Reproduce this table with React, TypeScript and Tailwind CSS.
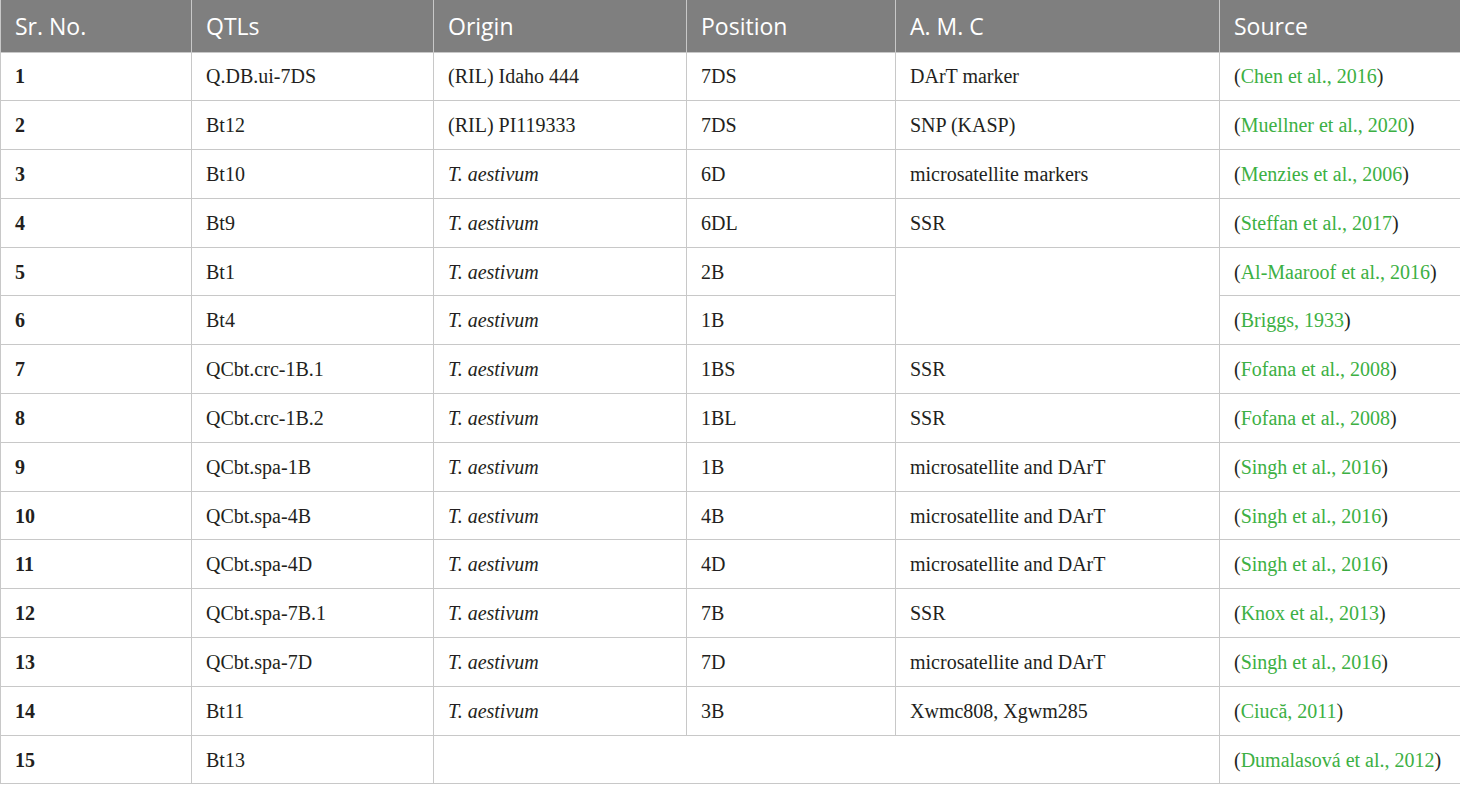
type Row = {
  no: string;
  qtl: string;
  origin?: string;
  italic?: boolean;
  pos?: string;
  amc?: string;
  src: string;
  year: string;
};

const rows: Row[] = [
  { no: '1', qtl: 'Q.DB.ui-7DS', origin: '(RIL) Idaho 444', pos: '7DS', amc: 'DArT marker', src: 'Chen et al.', year: '2016' },
  { no: '2', qtl: 'Bt12', origin: '(RIL) PI119333', pos: '7DS', amc: 'SNP (KASP)', src: 'Muellner et al.', year: '2020' },
  { no: '3', qtl: 'Bt10', origin: 'T. aestivum', italic: true, pos: '6D', amc: 'microsatellite markers', src: 'Menzies et al.', year: '2006' },
  { no: '4', qtl: 'Bt9', origin: 'T. aestivum', italic: true, pos: '6DL', amc: 'SSR', src: 'Steffan et al.', year: '2017' },
  { no: '5', qtl: 'Bt1', origin: 'T. aestivum', italic: true, pos: '2B', src: 'Al-Maaroof et al.', year: '2016' },
  { no: '6', qtl: 'Bt4', origin: 'T. aestivum', italic: true, pos: '1B', src: 'Briggs', year: '1933' },
  { no: '7', qtl: 'QCbt.crc-1B.1', origin: 'T. aestivum', italic: true, pos: '1BS', amc: 'SSR', src: 'Fofana et al.', year: '2008' },
  { no: '8', qtl: 'QCbt.crc-1B.2', origin: 'T. aestivum', italic: true, pos: '1BL', amc: 'SSR', src: 'Fofana et al.', year: '2008' },
  { no: '9', qtl: 'QCbt.spa-1B', origin: 'T. aestivum', italic: true, pos: '1B', amc: 'microsatellite and DArT', src: 'Singh et al.', year: '2016' },
  { no: '10', qtl: 'QCbt.spa-4B', origin: 'T. aestivum', italic: true, pos: '4B', amc: 'microsatellite and DArT', src: 'Singh et al.', year: '2016' },
  { no: '11', qtl: 'QCbt.spa-4D', origin: 'T. aestivum', italic: true, pos: '4D', amc: 'microsatellite and DArT', src: 'Singh et al.', year: '2016' },
  { no: '12', qtl: 'QCbt.spa-7B.1', origin: 'T. aestivum', italic: true, pos: '7B', amc: 'SSR', src: 'Knox et al.', year: '2013' },
  { no: '13', qtl: 'QCbt.spa-7D', origin: 'T. aestivum', italic: true, pos: '7D', amc: 'microsatellite and DArT', src: 'Singh et al.', year: '2016' },
  { no: '14', qtl: 'Bt11', origin: 'T. aestivum', italic: true, pos: '3B', amc: 'Xwmc808, Xgwm285', src: 'Ciucă', year: '2011' },
  { no: '15', qtl: 'Bt13', src: 'Dumalasová et al.', year: '2012' },
];

const headers = ['Sr. No.', 'QTLs', 'Origin', 'Position', 'A. M. C', 'Source'];
const td = 'border border-[#c8c8c8] px-[14px] align-middle';

export default function App() {
  return (
    <div className="w-[1460px] h-[785px] bg-white overflow-hidden">
      <table className="w-[1460px] table-fixed border-collapse text-[#231f20] font-['Liberation_Serif',serif] text-[20px]">
        <colgroup>
          <col className="w-[191px]" />
          <col className="w-[242px]" />
          <col className="w-[253px]" />
          <col className="w-[209px]" />
          <col className="w-[324px]" />
          <col className="w-[241px]" />
        </colgroup>
        <thead>
          <tr className="h-[52px] bg-[#7f7f7f]">
            {headers.map(h => (
              <th key={h} className="border-x border-[#c8c8c8] border-b px-[14px] text-left font-normal text-white text-[23px] font-['Open_Sans',sans-serif]">
                {h}
              </th>
            ))}
          </tr>
        </thead>
        <tbody>
          {rows.map(r => (
            <tr key={r.no} className="h-[48.8px]">
              <td className={`${td} font-bold`}>{r.no}</td>
              <td className={td}>{r.qtl}</td>
              {r.no === '15' ? (
                <td className={td} colSpan={3}></td>
              ) : (
                <>
                  <td className={`${td} ${r.italic ? 'italic' : ''}`}>{r.origin}</td>
                  <td className={td}>{r.pos}</td>
                  {r.no === '5' && <td className={td} rowSpan={2}></td>}
                  {r.no !== '5' && r.no !== '6' && <td className={td}>{r.amc}</td>}
                </>
              )}
              <td className={td}>
                (<span className="text-[#3cb043]">{r.src}, {r.year}</span>)
              </td>
            </tr>
          ))}
        </tbody>
      </table>
    </div>
  );
}
